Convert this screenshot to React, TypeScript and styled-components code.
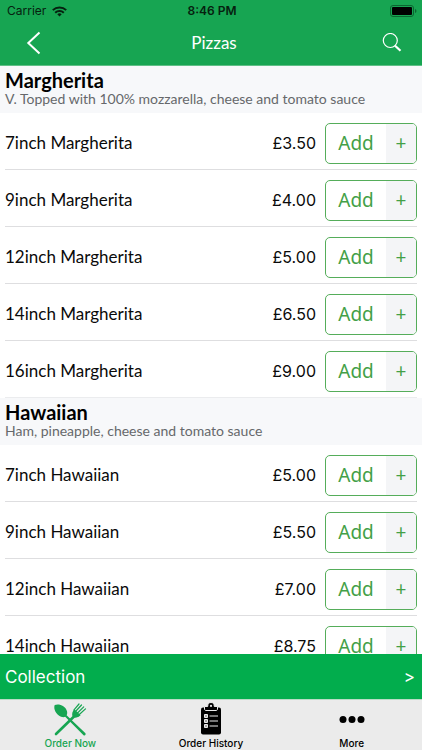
import React from "react";
import styled, { createGlobalStyle } from "styled-components";

const GlobalStyle = createGlobalStyle`
  * { box-sizing: border-box; }
  body { margin: 0; background: #fff; }
  button { font: inherit; color: inherit; border: 0; padding: 0; background: none; cursor: pointer; }
`;

const Screen = styled.div`
  height: 100vh;
  display: flex;
  flex-direction: column;
  font-family: Lato, sans-serif;
  color: #0a0a0a;
`;

const Header = styled.header`
  flex: none;
  background: #17a552;
  border-bottom: 1px solid #5fbf86;
`;

const StatusBar = styled.div`
  display: grid;
  grid-template-columns: 1fr auto 1fr;
  align-items: center;
  height: 22px;
  padding: 0 5px 0 7px;
  font: 400 12px/22px Inter, sans-serif;
  color: #06210f;
`;

const Carrier = styled.span`
  display: flex;
  align-items: center;
  gap: 6px;
`;

const Clock = styled.time`
  font-weight: 600;
`;

const Battery = styled.svg`
  justify-self: end;
`;

const NavBar = styled.div`
  display: grid;
  grid-template-columns: 1fr auto 1fr;
  align-items: center;
  height: 43px;
  padding: 0 20px 2px 26px;
  color: #fff;
`;

const Title = styled.h1`
  margin: 0;
  font-size: 17px;
  font-weight: 400;
  line-height: 22px;
`;

const IconButton = styled.button<{ $end?: boolean }>`
  display: flex;
  justify-self: ${(p) => (p.$end ? "end" : "start")};
`;

const Menu = styled.main`
  flex: 1;
  min-height: 0;
  overflow-y: auto;
  scrollbar-width: none;
`;

const SectionHeader = styled.div`
  height: 47px;
  padding: 4px 5px 0;
  background: #f7f8fa;
`;

const SectionTitle = styled.h2`
  margin: 0;
  font-size: 20px;
  font-weight: 700;
  line-height: 20px;
  color: #000;
`;

const SectionNote = styled.p`
  margin: 0;
  font-size: 14px;
  line-height: 18px;
  color: #66686b;
`;

const Items = styled.ul`
  margin: 0;
  padding: 0 5px;
  list-style: none;
`;

const Item = styled.li`
  display: flex;
  align-items: center;
  height: 57px;
  padding-top: 4px;
  border-bottom: 1px solid #dedee0;

  &:last-child { border-bottom-color: #ebecee; }
`;

const ItemName = styled.span`
  flex: 1;
  font-size: 17px;
  line-height: 24px;
`;

const Price = styled.span`
  margin-right: 9px;
  font: 400 16px/24px Inter, sans-serif;
`;

const AddButton = styled.button`
  display: flex;
  width: 92px;
  height: 41px;
  border: 1px solid #55ad5a;
  border-radius: 5px;
  overflow: hidden;
  background: #fff;
  color: #43a047;
`;

const AddLabel = styled.span`
  flex: 1;
  font: 400 19px/39px "Noto Sans", sans-serif;
`;

const Plus = styled.span`
  width: 30px;
  background: #f4f5f7;
  font: 400 19px/39px "Noto Sans", sans-serif;
`;

const CollectionBar = styled.button`
  flex: none;
  display: flex;
  justify-content: space-between;
  align-items: center;
  height: 45px;
  padding: 0 7px 0 5px;
  background: #02ad4d;
  color: #fff;
  font: 400 17px/24px Inter, sans-serif;
`;

const TabBar = styled.nav`
  flex: none;
  display: grid;
  grid-template-columns: repeat(3, 1fr);
  height: 51px;
  background: #ebebeb;
  border-top: 1px solid #b9dcc6;
`;

const Tab = styled.a<{ $active?: boolean }>`
  display: flex;
  flex-direction: column;
  align-items: center;
  padding-top: 2px;
  text-decoration: none;
  font: 500 10px/12px Inter, sans-serif;
  color: ${(p) => (p.$active ? "#17a552" : "#000")};

  svg { flex: none; }
`;

const WifiIcon = () => (
  <svg width="15" height="11" viewBox="0 0 15 11" fill="none" stroke="currentColor" strokeWidth="2" aria-hidden="true">
    <path d="M.8 4.1a9.6 9.6 0 0 1 13.4 0M3.2 6.7a6.2 6.2 0 0 1 8.6 0" />
    <path d="M7.5 10.5 5.3 8.3a3.2 3.2 0 0 1 4.4 0Z" fill="currentColor" stroke="none" />
  </svg>
);

const BatteryIcon = () => (
  <Battery width="27" height="12" viewBox="0 0 27 12" aria-label="Battery full">
    <rect x=".5" y=".5" width="23" height="11" rx="2.5" fill="none" stroke="#0b6631" />
    <rect x="2" y="2" width="20" height="8" rx="1" fill="#000" />
    <path d="M25 4v4c2-.8 2-3.2 0-4Z" fill="#0b6631" />
  </Battery>
);

const BackIcon = () => (
  <svg width="16" height="24" viewBox="0 0 16 24" fill="none" stroke="currentColor" strokeWidth="2" aria-hidden="true">
    <path d="M13.500 1.500 2.300 12l11.200 10.500" />
  </svg>
);

const SearchIcon = () => (
  <svg width="20" height="20" viewBox="0 0 20 20" fill="none" stroke="currentColor" aria-hidden="true">
    <circle cx="8.300" cy="7.500" r="7" strokeWidth="1.200" />
    <path d="M12.800 12.500 18.500 17.800" strokeWidth="2.200" />
  </svg>
);

const CutleryIcon = () => (
  <svg width="34" height="35" viewBox="0 0 34 35" fill="currentColor" aria-hidden="true">
    <path d="M1.700 3c3.800-1.800 10.800.4 12.300 6.200.4 1.600.2 3-.4 4.100L32.200 31c1.400 1.400-.5 3.300-1.900 1.900L12.200 14.800c-1.200.6-2.700.5-4.200-.1C2.900 12.600.2 6.900 1.700 3Z" />
    <g fill="none" stroke="currentColor" strokeLinecap="round">
      <path d="M3 32 21 14.500" strokeWidth="2.600" />
      <path d="m22.500 9.500 6-6.500M24.500 11l6.200-6.200M26 12.800l6.500-5.900M21 7.800l5-5.800" strokeWidth="1.200" />
    </g>
    <path d="m21.400 7.200 6.200 6c-2 2-4.500 2.800-6.500 2.400l-1.700-1.700c-.7-2.100 0-4.700 2-6.700Z" />
  </svg>
);

const ClipboardIcon = () => (
  <svg width="34" height="35" viewBox="0 0 34 35" aria-hidden="true">
    <rect x="7" y="5.500" width="20" height="27" rx="2" fill="#000" />
    <path d="M10.500 4.500h3.200C13.800 1.500 15 .5 17 .5s3.200 1 3.300 4h3.200V7c0 1-.6 1.500-1.500 1.500H12c-.9 0-1.500-.5-1.500-1.500Z" fill="#000" stroke="#ebebeb" strokeWidth="1" />
    <circle cx="17" cy="3.900" r="1.100" fill="#ebebeb" />
    <g fill="#aaa" stroke="#ebebeb">
      <path d="M10.500 12.500h3v3h-3ZM10.500 17.500h3v3h-3ZM10.500 22.500h3v3h-3Z" />
      <path d="M15.500 14h8.500M15.500 19h8.500M15.500 24h8.500" strokeWidth="1.200" />
    </g>
  </svg>
);

const MoreIcon = () => (
  <svg width="34" height="35" viewBox="0 0 34 35" aria-hidden="true">
    <circle cx="8" cy="17.500" r="3.500" />
    <circle cx="17" cy="17.500" r="3.500" />
    <circle cx="26" cy="17.500" r="3.500" />
  </svg>
);

const sections = [
  {
    name: "Margherita",
    note: "V. Topped with 100% mozzarella, cheese and tomato sauce",
    items: [["7inch", "£3.50"], ["9inch", "£4.00"], ["12inch", "£5.00"], ["14inch", "£6.50"], ["16inch", "£9.00"]],
  },
  {
    name: "Hawaiian",
    note: "Ham, pineapple, cheese and tomato sauce",
    items: [["7inch", "£5.00"], ["9inch", "£5.50"], ["12inch", "£7.00"], ["14inch", "£8.75"]],
  },
];

export default function App() {
  return (
    <Screen>
      <GlobalStyle />
      <Header>
        <StatusBar>
          <Carrier>Carrier <WifiIcon /></Carrier>
          <Clock>8:46 PM</Clock>
          <BatteryIcon />
        </StatusBar>
        <NavBar>
          <IconButton aria-label="Back"><BackIcon /></IconButton>
          <Title>Pizzas</Title>
          <IconButton $end aria-label="Search"><SearchIcon /></IconButton>
        </NavBar>
      </Header>
      <Menu>
        {sections.map((section) => (
          <section key={section.name}>
            <SectionHeader>
              <SectionTitle>{section.name}</SectionTitle>
              <SectionNote>{section.note}</SectionNote>
            </SectionHeader>
            <Items>
              {section.items.map(([size, price]) => (
                <Item key={size}>
                  <ItemName>{size} {section.name}</ItemName>
                  <Price>{price}</Price>
                  <AddButton aria-label={`Add ${size} ${section.name}`}>
                    <AddLabel>Add</AddLabel>
                    <Plus>+</Plus>
                  </AddButton>
                </Item>
              ))}
            </Items>
          </section>
        ))}
      </Menu>
      <CollectionBar>
        <span>Collection</span>
        <span>&gt;</span>
      </CollectionBar>
      <TabBar>
        <Tab href="#order" $active><CutleryIcon />Order Now</Tab>
        <Tab href="#history"><ClipboardIcon />Order History</Tab>
        <Tab href="#more"><MoreIcon />More</Tab>
      </TabBar>
    </Screen>
  );
}
